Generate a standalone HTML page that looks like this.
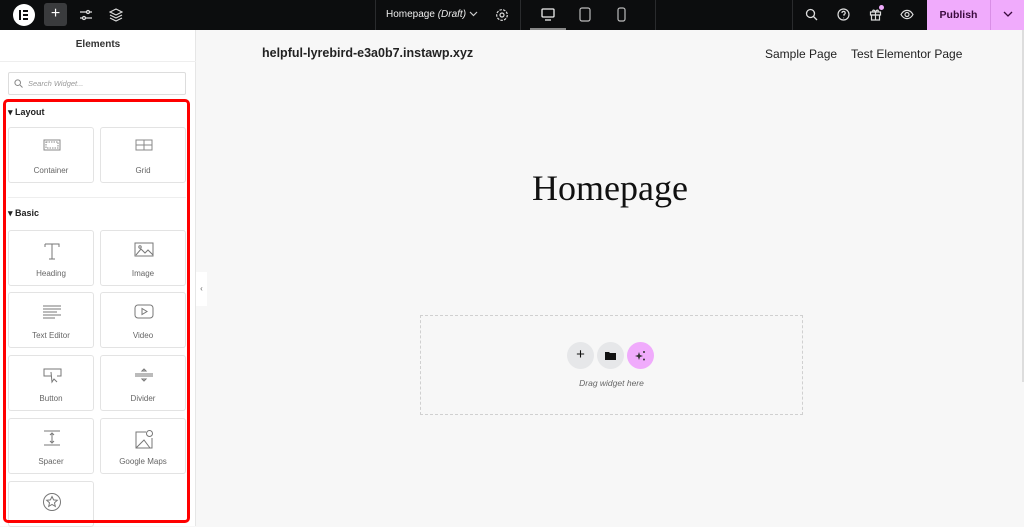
<!DOCTYPE html><html><head><style>
*{box-sizing:border-box;margin:0;padding:0}
body{width:1024px;height:526px;overflow:hidden;font-family:"Liberation Sans",sans-serif;background:#f7f7f7;position:relative}
.top{position:absolute;left:0;top:0;width:1024px;height:30px;background:#0c0d0e;color:#fff}
.ab{position:absolute}
.side{position:absolute;left:0;top:30px;width:196px;height:496px;background:#fff;border-right:1px solid #e6e6e6}
.card{position:absolute;width:86px;height:56px;border:1px solid #e3e3e3;border-radius:3px;background:#fff;text-align:center;font-size:8px;color:#666}
.card svg{position:absolute;left:33px;top:10px}
.card span{position:absolute;left:0;right:0;top:38px}
.sep{position:absolute;top:0;width:1px;height:30px;background:#2a2b2d}
</style></head><body>
<div class="top">
<div class="ab" style="left:13px;top:4px;width:22px;height:22px;border-radius:50%;background:#fff"></div>
<div class="ab" style="left:19px;top:10px;width:2px;height:10px;background:#0c0d0e"></div>
<div class="ab" style="left:23px;top:10px;width:5px;height:2px;background:#0c0d0e;box-shadow:0 4px 0 #0c0d0e,0 8px 0 #0c0d0e"></div>
<div class="ab" style="left:44px;top:3px;width:23px;height:23px;border-radius:3px;background:#3a3b3d;color:#fff;font-size:16px;text-align:center;line-height:22px">+</div>
<svg class="ab" style="left:79px;top:8px" width="14" height="14" fill="none" stroke="#ddd" stroke-width="1.3"><path d="M1 4h12M1 10h12"/><circle cx="9" cy="4" r="1.5" fill="#0c0d0e"/><circle cx="5" cy="10" r="1.5" fill="#0c0d0e"/></svg>
<svg class="ab" style="left:109px;top:8px" width="14" height="14" fill="none" stroke="#ddd" stroke-width="1.2"><path d="M7 1L13 4L7 7L1 4Z M1 7L7 10L13 7 M1 10L7 13L13 10"/></svg>
<div class="sep" style="left:375px"></div>
<div class="ab" style="left:386px;top:9px;font-size:10px;color:#eee">Homepage <i>(Draft)</i></div>
<svg class="ab" style="left:469px;top:11px" width="9" height="7" fill="none" stroke="#ccc" stroke-width="1.2"><path d="M1 1l3.5 3.5L8 1"/></svg>
<svg class="ab" style="left:495px;top:8px" width="14" height="14" fill="none" stroke="#ddd" stroke-width="1.2"><circle cx="7" cy="7" r="2"/><circle cx="7" cy="7" r="5.3" stroke-dasharray="2.5 1.2"/></svg>
<div class="sep" style="left:520px"></div>
<div class="ab" style="left:530px;top:28px;width:36px;height:2px;background:#888"></div>
<svg class="ab" style="left:541px;top:8px" width="14" height="13" fill="none" stroke="#eee" stroke-width="1.3"><rect x="1" y="1" width="12" height="8" rx="1"/><path d="M4 12h6"/></svg>
<svg class="ab" style="left:579px;top:7px" width="12" height="15" fill="none" stroke="#bbb" stroke-width="1.2"><rect x="1" y="1" width="10" height="13" rx="2"/></svg>
<svg class="ab" style="left:617px;top:7px" width="9" height="15" fill="none" stroke="#bbb" stroke-width="1.2"><rect x="1" y="1" width="7" height="13" rx="2"/></svg>
<div class="sep" style="left:655px"></div>
<div class="sep" style="left:792px"></div>
<svg class="ab" style="left:805px;top:8px" width="13" height="13" fill="none" stroke="#ddd" stroke-width="1.3"><circle cx="5.5" cy="5.5" r="4"/><path d="M8.5 8.5l3.5 3.5"/></svg>
<svg class="ab" style="left:837px;top:8px" width="13" height="13" fill="none" stroke="#ddd" stroke-width="1.2"><circle cx="6.5" cy="6.5" r="5.5"/><path d="M5 5a1.6 1.6 0 1 1 2 1.5v1.2M6.6 9.6v.6"/></svg>
<svg class="ab" style="left:869px;top:8px" width="14" height="13" fill="none" stroke="#ddd" stroke-width="1.2"><rect x="1.5" y="4" width="10" height="3"/><rect x="2.5" y="7" width="8" height="5"/><path d="M6.5 4v8M6.5 4C5 1 3 2 4 4M6.5 4C8 1 10 2 9 4"/></svg>
<div class="ab" style="left:879px;top:5px;width:5px;height:5px;border-radius:50%;background:#f0abfc"></div>
<svg class="ab" style="left:900px;top:9px" width="14" height="11" fill="none" stroke="#ddd" stroke-width="1.2"><path d="M1 5.5C4 0 10 0 13 5.5C10 11 4 11 1 5.5Z"/><circle cx="7" cy="5.5" r="2"/></svg>
<div class="ab" style="left:927px;top:0;width:63px;height:30px;background:#f0abfc;color:#3a0a3d;font-weight:bold;font-size:10.5px;text-align:center;line-height:30px">Publish</div>
<div class="ab" style="left:990px;top:0;width:34px;height:30px;background:#f0abfc;border-left:1px solid #d98ee6"></div>
<svg class="ab" style="left:1003px;top:11px" width="10" height="7" fill="none" stroke="#3a0a3d" stroke-width="1.3"><path d="M1 1l4 4 4-4"/></svg>
</div>

<div class="side">
<div class="ab" style="left:0;top:9px;width:196px;text-align:center;font-size:10px;font-weight:bold;color:#333">Elements</div>
<div class="ab" style="left:0;top:31px;width:196px;height:1px;background:#eee"></div>
<div class="ab" style="left:8px;top:42px;width:178px;height:23px;border:1px solid #ddd;border-radius:2px"></div>
<svg class="ab" style="left:14px;top:49px" width="9" height="9" fill="none" stroke="#888" stroke-width="1"><circle cx="3.7" cy="3.7" r="2.8"/><path d="M6 6l2.5 2.5"/></svg>
<div class="ab" style="left:28px;top:49px;font-size:7.5px;font-style:italic;color:#999">Search Widget...</div>
<div class="ab" style="left:8px;top:77px;font-size:9px;font-weight:bold;color:#222">▾ Layout</div>
<div class="ab" style="left:8px;top:167px;width:178px;height:1px;background:#eee"></div>
<div class="ab" style="left:8px;top:178px;font-size:9px;font-weight:bold;color:#222">▾ Basic</div>

<div class="card" style="left:8px;top:97px"><svg width="20" height="14" fill="none" stroke="#888" stroke-width="1"><rect x="2" y="2" width="16" height="10"/><rect x="4" y="4" width="12" height="6" stroke-dasharray="1.5 1"/></svg><span>Container</span></div>
<div class="card" style="left:100px;top:97px"><svg width="20" height="14" fill="none" stroke="#888" stroke-width="1"><rect x="2" y="2" width="16" height="10"/><path d="M10 2v10M2 7h16"/></svg><span>Grid</span></div>

<div class="card" style="left:8px;top:200px"><svg width="20" height="20" fill="none" stroke="#777" stroke-width="1"><path d="M3 3h14v3M3 3v3M10 3v15M7 18h6"/></svg><span>Heading</span></div>
<div class="card" style="left:100px;top:200px"><svg width="20" height="18" fill="none" stroke="#777" stroke-width="1"><rect x="1" y="2" width="18" height="13"/><path d="M2 14l5-6 4 4 3-3 5 5"/><circle cx="6" cy="6" r="1.2"/></svg><span>Image</span></div>
<div class="card" style="left:8px;top:262px"><svg width="20" height="18" fill="none" stroke="#777" stroke-width="1"><path d="M1 3h18M1 6h18M1 9h14M1 12h18M1 15h12"/></svg><span>Text Editor</span></div>
<div class="card" style="left:100px;top:262px"><svg width="20" height="18" fill="none" stroke="#777" stroke-width="1"><rect x="1" y="2" width="18" height="13" rx="3"/><path d="M8 5.5v6l5-3z"/></svg><span>Video</span></div>
<div class="card" style="left:8px;top:325px"><svg width="20" height="18" fill="none" stroke="#777" stroke-width="1"><path d="M9 10H2V3h17v7h-4"/><path d="M9 6l1 10 2-3 3 3"/></svg><span>Button</span></div>
<div class="card" style="left:100px;top:325px"><svg width="20" height="18" fill="none" stroke="#777" stroke-width="1"><path d="M1 8h18M1 10h18M8 5l2-2 2 2zM8 13l2 2 2-2z"/></svg><span>Divider</span></div>
<div class="card" style="left:8px;top:388px"><svg width="20" height="18" fill="none" stroke="#777" stroke-width="1"><path d="M2 2h16M2 16h16M10 5v8M8 6l2-2 2 2M8 12l2 2 2-2"/></svg><span>Spacer</span></div>
<div class="card" style="left:100px;top:388px"><svg width="20" height="20" fill="none" stroke="#777" stroke-width="1"><path d="M12 3H2v16h16V9"/><path d="M2 19l8-8 6 8"/><circle cx="15.5" cy="4.5" r="3"/></svg><span>Google Maps</span></div>
<div class="card" style="left:8px;top:451px;height:46px"><svg width="20" height="20" fill="none" stroke="#777" stroke-width="1"><circle cx="10" cy="10" r="8.5"/><path d="M10 4.5l1.6 3.4 3.7.4-2.8 2.5.8 3.6-3.3-1.9-3.3 1.9.8-3.6-2.8-2.5 3.7-.4z"/></svg></div>

<div class="ab" style="left:3px;top:69px;width:187px;height:424px;border:3px solid #ff0000;border-radius:5px"></div>
</div>
<div class="ab" style="left:196px;top:272px;width:11px;height:34px;background:#fff;font-size:8px;color:#666;text-align:center;line-height:34px">‹</div>

<div class="ab" style="left:262px;top:46px;font-size:12.5px;font-weight:bold;color:#222">helpful-lyrebird-e3a0b7.instawp.xyz</div>
<div class="ab" style="left:765px;top:47px;font-size:12px;color:#222">Sample Page</div>
<div class="ab" style="left:851px;top:47px;font-size:12px;color:#222">Test Elementor Page</div>
<div class="ab" style="left:420px;top:167px;width:380px;text-align:center;font-family:'Liberation Serif',serif;font-size:36px;color:#111">Homepage</div>

<div class="ab" style="left:420px;top:315px;width:383px;height:100px;border:1.5px dashed #d0d0d0"></div>
<div class="ab" style="left:567px;top:342px;width:27px;height:27px;border-radius:50%;background:#e6e7e9;text-align:center;line-height:26px;font-size:15px;color:#111">+</div>
<div class="ab" style="left:597px;top:342px;width:27px;height:27px;border-radius:50%;background:#e6e7e9"></div>
<svg class="ab" style="left:605px;top:351px" width="11" height="9"><path d="M0 1h4l1 1h6v7H0z" fill="#111"/></svg>
<div class="ab" style="left:627px;top:342px;width:27px;height:27px;border-radius:50%;background:#f0abfc"></div>
<svg class="ab" style="left:634px;top:349px" width="13" height="13" fill="#333"><path d="M5 3l1 3 3 1-3 1-1 3-1-3-3-1 3-1z"/><circle cx="10" cy="3" r="1"/><circle cx="10" cy="10.5" r="1"/></svg>
<div class="ab" style="left:420px;top:378px;width:383px;text-align:center;font-size:8.5px;font-style:italic;color:#666">Drag widget here</div>
<div class="ab" style="left:1022px;top:30px;width:2px;height:352px;background:#ddd"></div>
</body></html>
